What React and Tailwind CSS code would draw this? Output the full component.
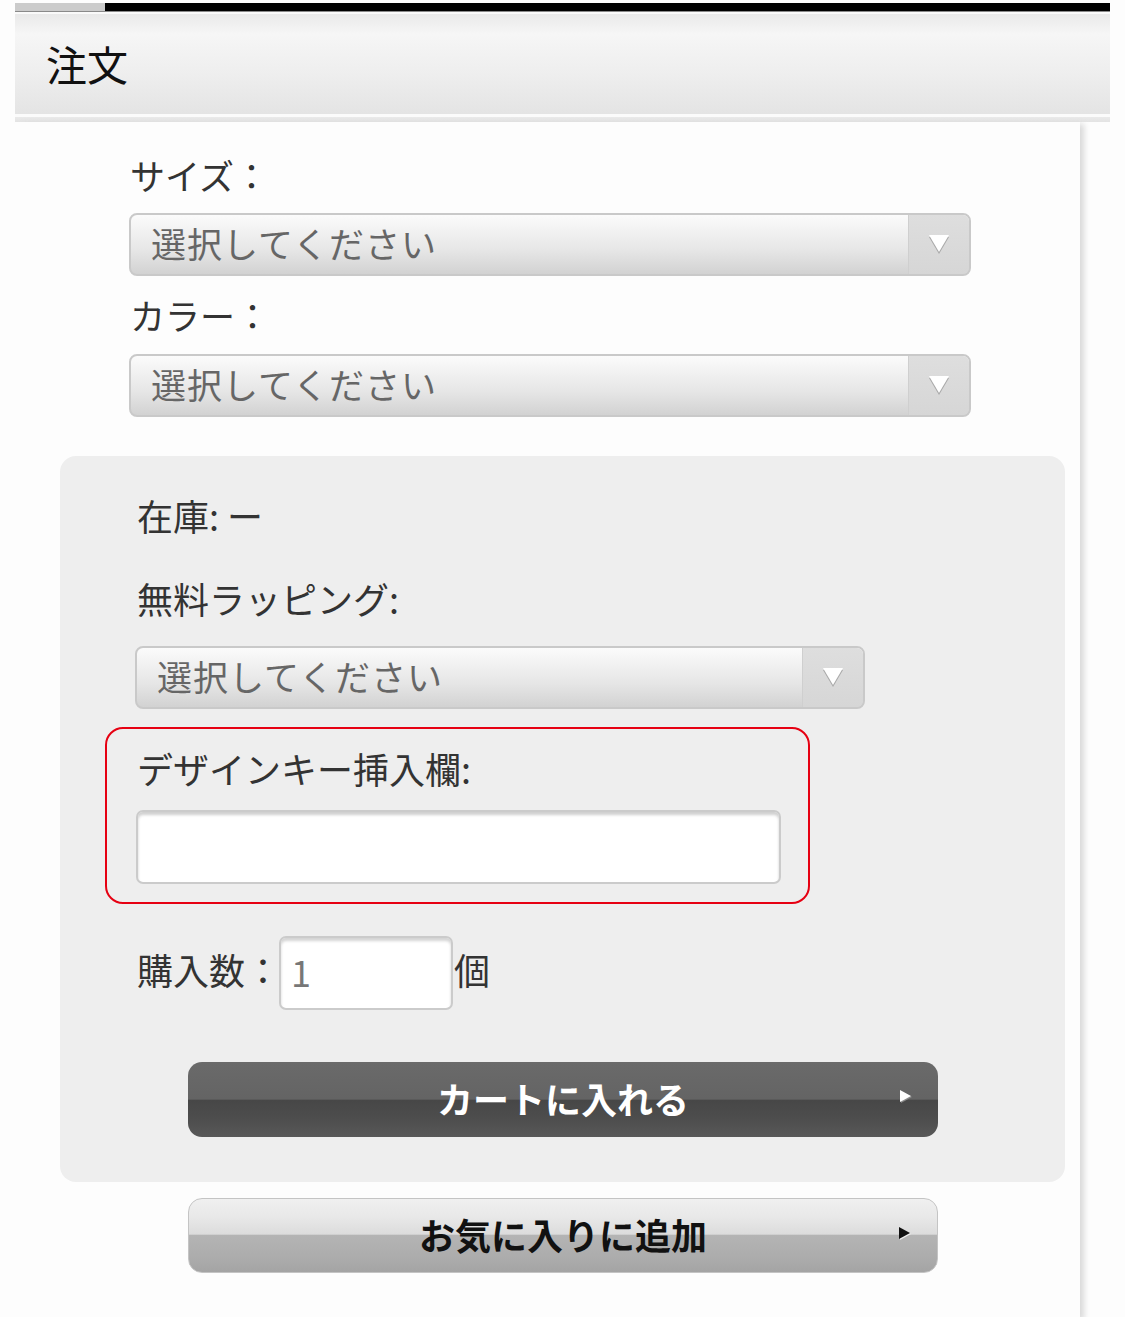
import React from 'react';

const font = { fontFamily: '"Noto Sans CJK JP", "Noto Sans", sans-serif' };

const SelectArrow = () => (
    <svg width="22" height="20" viewBox="0 0 22 20">
        <polygon points="1,2 21,2 11,19" fill="#a8a8a8" />
        <polygon points="1,0 21,0 11,17" fill="#ffffff" />
    </svg>
);

const SelectBox = ({ width }) => (
    <div
        className={`${width} h-[63px] flex rounded-[8px] border-2 border-[#c9c9c9] overflow-hidden bg-[linear-gradient(#fbfbfb,#e6e6e6_60%,#d2d2d2)]`}
    >
        <div className="flex-1 flex items-center pl-[20px] pb-[2px] text-[35px] text-[#666] tracking-[1px]">
            選択してください
        </div>
        <div className="w-[61px] flex items-center justify-center bg-[linear-gradient(#dedede,#d6d6d6)] border-l border-[#cfcfcf]">
            <SelectArrow />
        </div>
    </div>
);

const PlayIcon = ({ color, shadow }) => (
    <svg width="14" height="16" viewBox="0 0 14 16">
        <polygon points="2,2 13,8 2,14" fill={shadow} />
        <polygon points="1,1 12,7 1,13" fill={color} />
    </svg>
);

const App = () => {
    return (
        <div className="w-[1125px] h-[1317px] bg-[#fdfdfd] overflow-hidden text-[#333]" style={font}>
            {/* header */}
            <div className="ml-[15px] w-[1095px] pt-[3px]">
                <div className="flex h-[8px]">
                    <div className="w-[90px] bg-[#cbcbcb]" />
                    <div className="flex-1 bg-black" />
                </div>
                <div className="h-[1px] bg-[#8a8a8a]" />
                <div className="h-[2px] bg-[#fafafa]" />
                <div className="h-[100px] flex items-center pl-[31px] bg-[linear-gradient(#e9e9e9,#f6f6f6_20%,#eeeeee_60%,#e4e4e4)] text-[41px] text-[#111]">
                    注文
                </div>
                <div className="h-[3px] bg-[#fbfbfb]" />
                <div className="h-[5px] bg-[linear-gradient(#eaeaea,#e3e3e3)]" />
            </div>

            {/* content */}
            <div className="ml-[15px] w-[1065px] h-[1200px] relative shadow-[6px_0_6px_-2px_#d8d8d8] pt-[32px]">
                <div className="ml-[114px]">
                    <div className="h-[48px] flex items-center pb-[5px] ml-[1px] text-[35px]">サイズ：</div>
                    <div className="mt-[11px]">
                        <SelectBox width="w-[842px]" />
                    </div>
                    <div className="h-[48px] mt-[18px] flex items-center pb-[5px] ml-[1px] text-[35px]">カラー：</div>
                    <div className="mt-[12px]">
                        <SelectBox width="w-[842px]" />
                    </div>
                </div>

                {/* stock panel */}
                <div className="ml-[45px] w-[1005px] mt-[39px] bg-[#eeeeee] rounded-[16px] pt-[37px] pb-[45px]">
                    <div className="pl-[77px] h-[48px] flex items-center pb-[5px] text-[36px]">在庫: ー</div>
                    <div className="pl-[77px] h-[48px] mt-[35px] flex items-center pb-[5px] text-[36px]">無料ラッピング:</div>
                    <div className="ml-[75px] mt-[22px]">
                        <SelectBox width="w-[730px]" />
                    </div>

                    <div className="ml-[45px] mt-[18px] w-[705px] border-2 border-[#e60012] rounded-[18px] pt-[17px] pb-[18px] pl-[29px]">
                        <div className="h-[48px] flex items-center pb-[5px] pl-[1px] text-[36px]">デザインキー挿入欄:</div>
                        <div className="mt-[16px] w-[645px] h-[74px] bg-white border-2 border-[#cbcbcb] rounded-[7px] shadow-[inset_0_3px_3px_#d0d0d0]" />
                    </div>

                    <div className="ml-[77px] mt-[32px] flex items-center">
                        <span className="w-[142px] text-[36px] pb-[8px] whitespace-nowrap">購入数：</span>
                        <div className="w-[174px] h-[74px] bg-white border-2 border-[#cbcbcb] rounded-[7px] shadow-[inset_0_3px_3px_#d4d4d4] flex items-center pl-[10px] pb-[4px] text-[36px] text-[#777]">
                            1
                        </div>
                        <span className="text-[36px] ml-[1px] pb-[8px]">個</span>
                    </div>

                    <button className="ml-[128px] mt-[52px] w-[750px] h-[75px] rounded-[14px] relative flex items-center justify-center text-white font-bold text-[36px] bg-[linear-gradient(#6a6a6a,#646464_49%,#5a5a5a_50%,#474747_51%,#4d4d4d_75%,#585858)]">
                        <span className="pb-[4px]">カートに入れる</span>
                        <span className="absolute right-[25px] top-[27px]">
                            <PlayIcon color="#ffffff" shadow="#8a8a8a" />
                        </span>
                    </button>
                </div>

                <button className="ml-[173px] mt-[16px] w-[750px] h-[75px] rounded-[14px] relative flex items-center justify-center text-[#111] font-bold text-[36px] border border-[#c4c4c4] bg-[linear-gradient(#f0f0f0,#e8e8e8_25%,#dcdcdc_48%,#b4b4b4_50%,#acacac_80%,#a4a4a4)]">
                    <span className="pb-[4px]">お気に入りに追加</span>
                    <span className="absolute right-[25px] top-[27px]">
                        <PlayIcon color="#111111" shadow="#eeeeee" />
                    </span>
                </button>
            </div>
        </div>
    );
};

export default App;
